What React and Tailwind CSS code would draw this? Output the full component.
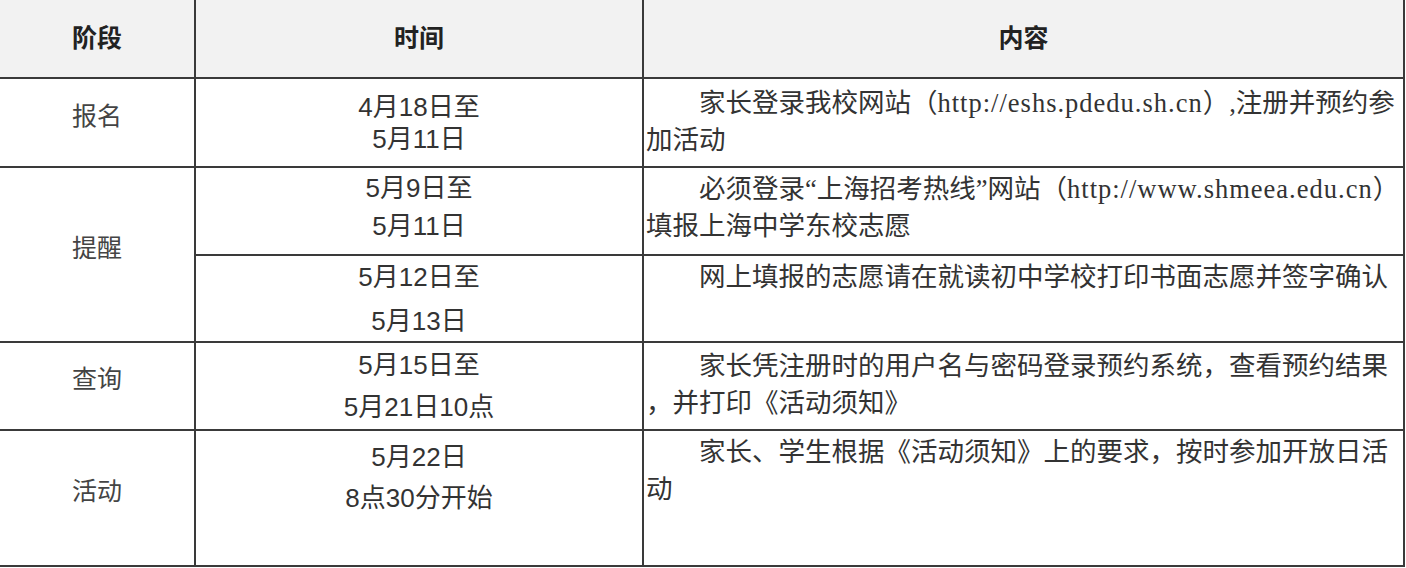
const Url = ({ children }) => <span className="tracking-[1px]">{children}</span>;

const rows = [
  {
    stage: "报名",
    times: [
      {
        lines: ["4月18日至", "5月11日"],
        h: "h-[89px]",
        cell: "align-middle",
        gap: "gap-0",
        content: [
          <>
            家长登录我校网站（<Url>http://eshs.pdedu.sh.cn</Url>）,注册并预约参
          </>,
          "加活动",
        ],
        pt: "pt-[6px]",
      },
    ],
  },
  {
    stage: "提醒",
    times: [
      {
        lines: ["5月9日至", "5月11日"],
        h: "h-[88px]",
        cell: "align-top pt-[4px]",
        gap: "gap-[6px]",
        content: [
          <>
            必须登录“上海招考热线”网站（<Url>http://www.shmeea.edu.cn</Url>）
          </>,
          "填报上海中学东校志愿",
        ],
        pt: "pt-[3px]",
      },
      {
        lines: ["5月12日至", "5月13日"],
        h: "h-[87px]",
        cell: "align-middle",
        gap: "gap-[12px]",
        content: ["网上填报的志愿请在就读初中学校打印书面志愿并签字确认"],
        pt: "pt-[3px]",
      },
    ],
  },
  {
    stage: "查询",
    times: [
      {
        lines: ["5月15日至", "5月21日10点"],
        h: "h-[88px]",
        cell: "align-middle",
        gap: "gap-[10px]",
        content: [
          "家长凭注册时的用户名与密码登录预约系统，查看预约结果",
          "，并打印《活动须知》",
        ],
        pt: "pt-[5px]",
      },
    ],
  },
  {
    stage: "活动",
    times: [
      {
        lines: ["5月22日", "8点30分开始"],
        h: "h-[136px]",
        cell: "align-top pt-[10px]",
        gap: "gap-[9px]",
        content: [
          "家长、学生根据《活动须知》上的要求，按时参加开放日活",
          "动",
        ],
        pt: "pt-[3px]",
      },
    ],
  },
];

const sans = "font-['Liberation_Sans','Noto_Sans_CJK_SC',sans-serif]";
const serif = "font-['Liberation_Serif','Noto_Sans_CJK_SC',serif]";

export default function App() {
  return (
    <div className="w-[1406px] h-[568px] bg-white overflow-hidden">
      <table className="w-[1405px] table-fixed border-separate border-spacing-0 text-[#333]">
        <colgroup>
          <col className="w-[196px]" />
          <col className="w-[448px]" />
          <col className="w-[761px]" />
        </colgroup>
        <thead>
          <tr className="bg-[#f2f2f2]">
            <th className={`h-[79px] border-b-2 border-r-2 border-[#3a3a3a] text-[25px] font-bold text-[#222] ${sans}`}>
              阶段
            </th>
            <th className={`h-[79px] border-b-2 border-r-2 border-[#3a3a3a] text-[25px] font-bold text-[#222] ${sans}`}>
              时间
            </th>
            <th className={`h-[79px] border-b-2 border-r-2 border-[#3a3a3a] text-[25px] font-bold text-[#222] ${sans}`}>
              内容
            </th>
          </tr>
        </thead>
        <tbody>
          {rows.map((row) =>
            row.times.map((t, i) => (
              <tr key={row.stage + i}>
                {i === 0 && (
                  <td
                    rowSpan={row.times.length}
                    className={`border-b-2 border-r-2 border-[#3a3a3a] text-center align-middle pb-3 text-[25px] text-[#444] ${serif}`}
                  >
                    {row.stage}
                  </td>
                )}
                <td
                  className={`${t.h} border-b-2 border-r-2 border-[#3a3a3a] text-center text-[26px] text-[#333] ${t.cell} ${sans}`}
                >
                  <div className={`flex flex-col items-center leading-[32px] ${t.gap}`}>
                    {t.lines.map((l) => (
                      <div key={l}>{l}</div>
                    ))}
                  </div>
                </td>
                <td
                  className={`${t.h} border-b-2 border-r-2 border-[#3a3a3a] align-top pl-[2px] ${t.pt} text-[26.5px] leading-[37px] text-[#333] whitespace-nowrap ${serif}`}
                >
                  {t.content.map((c, j) => (
                    <div key={j} className={j === 0 ? "indent-[53px]" : ""}>
                      {c}
                    </div>
                  ))}
                </td>
              </tr>
            ))
          )}
        </tbody>
      </table>
    </div>
  );
}
